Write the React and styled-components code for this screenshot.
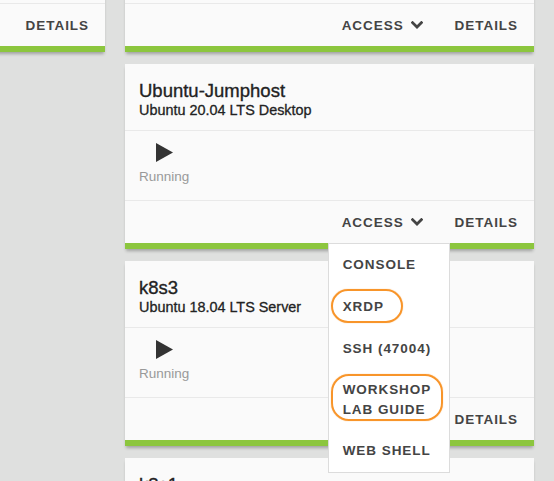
import React from "react";
import styled, { createGlobalStyle } from "styled-components";

const GlobalStyle = createGlobalStyle`
  html, body { margin: 0; padding: 0; }
  body {
    background: #dfe0df;
    font-family: "Liberation Sans", Arial, Helvetica, sans-serif;
    overflow: hidden;
    width: 554px;
    height: 481px;
  }
`;

const Board = styled.div`
  display: flex;
  align-items: flex-start;
  gap: 20px;
  margin-left: -304px;
  margin-top: -133px;
`;

const Column = styled.div`
  width: 409px;
  display: flex;
  flex-direction: column;
  gap: 12px;
`;

const Card = styled.div`
  position: relative;
  background: #fafafa;
  border-bottom: 6px solid #8cc63e;
  box-shadow: 0 3px 3px -1px rgba(0, 0, 0, 0.28);
  z-index: ${(p) => (p.$raised ? 5 : 1)};
`;

const Header = styled.div`
  height: 67px;
  box-sizing: border-box;
  padding: 16px 14px 0;
  border-bottom: 1px solid #e9e9e9;
`;

const Title = styled.div`
  font-size: 18.5px;
  line-height: 21px;
  color: #222;
  -webkit-text-stroke: 0.35px #222;
`;

const Subtitle = styled.div`
  font-size: 14.4px;
  line-height: 18px;
  color: #222;
  -webkit-text-stroke: 0.3px #222;
`;

const Body = styled.div`
  height: 70px;
  box-sizing: border-box;
  padding: 12px 14px 0;
  border-bottom: 1px solid #e9e9e9;
`;

const Status = styled.div`
  display: inline-flex;
  flex-direction: column;
  align-items: center;
  gap: 7px;
`;

const StatusText = styled.span`
  font-size: 13.5px;
  line-height: 16px;
  color: #999;
`;

const Footer = styled.div`
  height: 42px;
  display: flex;
  justify-content: flex-end;
  align-items: stretch;
`;

const ActionWrap = styled.div`
  position: relative;
  display: flex;
`;

const Action = styled.button`
  display: flex;
  align-items: center;
  gap: 7px;
  padding: 0 16px;
  border: none;
  background: transparent;
  font-family: inherit;
  font-weight: bold;
  font-size: 13.5px;
  letter-spacing: 0.95px;
  color: #444;
  cursor: pointer;
`;

const Menu = styled.ul`
  position: absolute;
  top: 100%;
  left: 2px;
  width: 122px;
  box-sizing: border-box;
  margin: 0;
  padding: 0;
  list-style: none;
  background: #fff;
  border: 1px solid #dcdcdc;
  z-index: 20;
`;

const MenuItem = styled.li`
  padding: ${(p) => (p.$double ? "10px" : "11px")} 14px;
  font-weight: bold;
  font-size: 13.5px;
  line-height: 20px;
  letter-spacing: 0.95px;
  color: #444;
  white-space: nowrap;
`;

const Circled = styled.span`
  position: relative;
  display: inline-block;
  &::after {
    content: "";
    position: absolute;
    top: ${(p) => (p.$double ? "-6px" : "-8px")};
    bottom: ${(p) => (p.$double ? "-1px" : "-6px")};
    left: -12px;
    right: ${(p) => (p.$double ? "-12px" : "-19px")};
    border: 2.5px solid #f8952a;
    border-radius: 18px;
    box-shadow: 0 0 1px rgba(248, 149, 42, 0.8);
  }
`;

const Chevron = () => (
  <svg width="12" height="8" viewBox="0 0 12 8" aria-hidden="true">
    <path d="M1.6 1.6 L6 6 L10.4 1.6" fill="none" stroke="#444" strokeWidth="2.7" strokeLinecap="square" />
  </svg>
);

const Play = () => (
  <svg width="17" height="19" viewBox="0 0 17 19" aria-hidden="true">
    <polygon points="0,0 17,9.5 0,19" fill="#333" />
  </svg>
);

function AccessMenu() {
  return (
    <Menu>
      <MenuItem>CONSOLE</MenuItem>
      <MenuItem>
        <Circled>XRDP</Circled>
      </MenuItem>
      <MenuItem>SSH (47004)</MenuItem>
      <MenuItem $double>
        <Circled $double>
          WORKSHOP
          <br />
          LAB GUIDE
        </Circled>
      </MenuItem>
      <MenuItem>WEB SHELL</MenuItem>
    </Menu>
  );
}

function VmCard({ title, subtitle, access = true, open = false }) {
  return (
    <Card $raised={open}>
      <Header>
        <Title>{title}</Title>
        <Subtitle>{subtitle}</Subtitle>
      </Header>
      <Body>
        <Status>
          <Play />
          <StatusText>Running</StatusText>
        </Status>
      </Body>
      <Footer>
        {access && (
          <ActionWrap>
            <Action>
              ACCESS
              <Chevron />
            </Action>
            {open && <AccessMenu />}
          </ActionWrap>
        )}
        <ActionWrap>
          <Action>DETAILS</Action>
        </ActionWrap>
      </Footer>
    </Card>
  );
}

export default function App() {
  return (
    <>
      <GlobalStyle />
      <Board>
        <Column>
          <VmCard title="k8s-lab" subtitle="Lab Environment" access={false} />
        </Column>
        <Column>
          <VmCard title="k8s2" subtitle="Ubuntu 18.04 LTS Server" />
          <VmCard title="Ubuntu-Jumphost" subtitle="Ubuntu 20.04 LTS Desktop" open />
          <VmCard title="k8s3" subtitle="Ubuntu 18.04 LTS Server" />
          <VmCard title="k8s1" subtitle="Ubuntu 18.04 LTS Server" />
        </Column>
      </Board>
    </>
  );
}
